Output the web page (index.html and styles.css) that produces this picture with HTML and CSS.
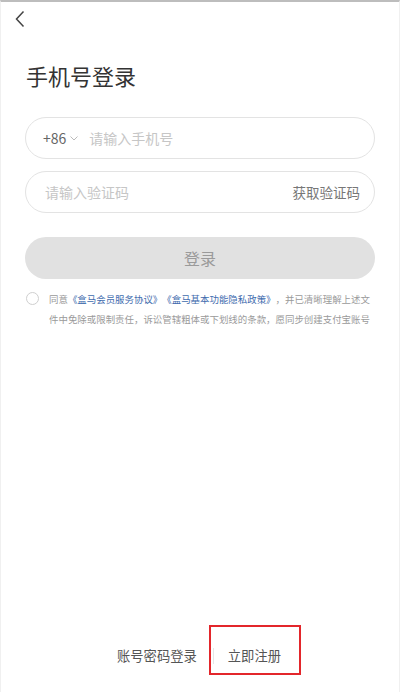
FILE: index.html
```html
<!DOCTYPE html>
<html lang="zh-CN">
<head>
  <meta charset="utf-8">
  <title>手机号登录</title>
  <link rel="stylesheet" href="styles.css">
</head>
<body>
  <div class="page">
    <div class="nav">
      <svg class="back" width="10" height="18" viewBox="0 0 10 18">
        <path d="M8.5 1.5 L1.5 9 L8.5 16.5" fill="none" stroke="#444" stroke-width="1.5"/>
      </svg>
    </div>

    <h1 class="title">手机号登录</h1>

    <div class="form">
      <div class="field">
        <span class="prefix">+86</span>
        <svg class="caret" width="8" height="5" viewBox="0 0 8 5">
          <path d="M0.5 0.5 L4 4 L7.5 0.5" fill="none" stroke="#bbb" stroke-width="1"/>
        </svg>
        <span class="placeholder">请输入手机号</span>
      </div>

      <div class="field">
        <span class="placeholder">请输入验证码</span>
        <span class="get-code">获取验证码</span>
      </div>

      <button type="button" class="button">登录</button>

      <div class="agree">
        <span class="radio"></span>
        <p class="agree-text">同意<a>《盒马会员服务协议》</a><a>《盒马基本功能隐私政策》</a>，并已清晰理解上述文件中免除或限制责任，诉讼管辖粗体或下划线的条款，愿同步创建支付宝账号</p>
      </div>
    </div>

    <div class="footer">
      <span class="footer-link">账号密码登录</span>
      <span class="divider"></span>
      <span class="footer-link register">立即注册</span>
      <span class="highlight"></span>
    </div>
  </div>
</body>
</html>
```

FILE: styles.css
```css
html, body {
  margin: 0;
  padding: 0;
}

body {
  font-family: "Noto Sans CJK SC", "Noto Sans", sans-serif;
  background: white;
  color: #333;
}

.page {
  position: relative;
  display: flex;
  flex-direction: column;
  height: 692px;
  box-sizing: border-box;
  border-top: 2px solid #bdbdbd;
  border-left: 1px solid #f0f0f0;
  border-right: 1px solid #f0f0f0;
}

.nav {
  height: 50px;
  padding: 8px 0 0 14px;
  box-sizing: border-box;
}

.back {
  display: block;
}

.title {
  margin: 7px 0 0 25px;
  font-size: 22px;
  line-height: 32px;
  font-weight: 400;
  color: #333;
}

.form {
  padding: 0 24px;
  margin-top: 26px;
}

.field {
  display: flex;
  align-items: center;
  height: 42px;
  box-sizing: border-box;
  border: 1px solid #e3e3e3;
  border-radius: 21px;
  padding: 0 14px 0 17px;
  margin-bottom: 12px;
  font-size: 14px;
}

.prefix {
  color: #666;
}

.caret {
  margin: 1px 11px 0 4px;
}

.placeholder {
  color: #c6c6c6;
  flex: 1;
  padding-left: 2px;
}

.field .prefix + .caret + .placeholder {
  padding-left: 0;
}

.get-code {
  color: #777;
  font-size: 13.5px;
}

.button {
  display: block;
  width: 100%;
  height: 42px;
  margin-top: 24px;
  border: none;
  border-radius: 21px;
  background: #e1e1e1;
  color: #9a9a9a;
  font-family: inherit;
  font-size: 16px;
}

.agree {
  display: flex;
  align-items: flex-start;
  margin-top: 10px;
}

.radio {
  flex: none;
  width: 11px;
  height: 11px;
  border: 1px solid #cfcfcf;
  border-radius: 50%;
  margin: 3px 10px 0 1px;
}

.agree-text {
  margin: 0;
  width: 324px;
  font-size: 9.45px;
  line-height: 20px;
  color: #9a9a9a;
  text-spacing-trim: space-all;
}

.agree-text a {
  color: #3f6cae;
}

.footer {
  position: relative;
  display: flex;
  justify-content: center;
  align-items: center;
  margin-top: auto;
  height: 62px;
  padding-bottom: 6px;
  padding-right: 2px;
}

.footer-link {
  font-size: 13.3px;
  color: #555;
}

.divider {
  width: 1px;
  height: 16px;
  background: #e6e6e6;
  margin: 2px 14px 0 16px;
}

/* red box drawn over the register link */
.highlight {
  position: absolute;
  left: 208px;
  top: 1px;
  width: 88px;
  height: 46px;
  border: 2px solid #e3262b;
}
```
